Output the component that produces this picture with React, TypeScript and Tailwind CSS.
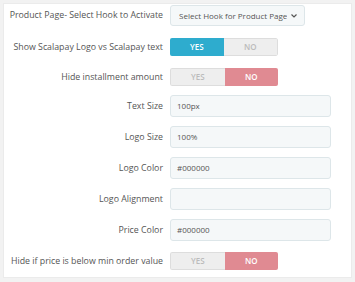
import React from "react";

const font = { fontFamily: '"Open Sans", "Noto Sans", sans-serif' };

function Label({ children }: { children: React.ReactNode }) {
  return (
    <div className="w-[159px] shrink-0 text-right text-[8.8px] text-[#555] leading-none whitespace-nowrap">
      {children}
    </div>
  );
}

function Toggle({ yes }: { yes: boolean }) {
  return (
    <div className="flex h-[18px] w-[108px] rounded-[2px] overflow-hidden text-[8px] font-semibold leading-none">
      <div
        className={
          yes
            ? "flex-1 flex items-center justify-center bg-[#2eacce] text-white"
            : "flex-1 flex items-center justify-center bg-[#eeeeee] text-[#bbbbbb] border border-[#dddddd] border-r-0 rounded-l-[2px]"
        }
      >
        YES
      </div>
      <div
        className={
          yes
            ? "flex-1 flex items-center justify-center bg-[#eeeeee] text-[#bbbbbb] border border-[#dddddd] border-l-0 rounded-r-[2px]"
            : "flex-1 flex items-center justify-center bg-[#e08a92] text-white"
        }
      >
        NO
      </div>
    </div>
  );
}

function Input({ value }: { value: string }) {
  return (
    <div className="h-[22px] w-[161px] rounded-[3px] border border-[#dde6e9] bg-[#f5f8f9] flex items-center px-[6px] text-[8px] text-[#555]">
      {value}
    </div>
  );
}

export default function App() {
  return (
    <div className="w-[355px] h-[282px] bg-[#f2f2f2] pt-[3px] pl-[3px]" style={font}>
      <div className="w-[349px] h-[275px] bg-white border border-[#ebebeb] flex flex-col">
        <div className="flex items-center gap-[7px] h-[21px] mt-[1px]">
          <Label>Product Page- Select Hook to Activate</Label>
          <div className="h-[21px] w-[135px] rounded-[3px] border border-[#dde6e9] bg-[#f5f8f9] flex items-center justify-between pl-[8px] pr-[6px] text-[8px] text-[#555]">
            <span className="whitespace-nowrap overflow-hidden">Select Hook for Product Page</span>
            <svg width="8" height="8" viewBox="0 0 8 8" className="shrink-0 ml-[3px]">
              <path d="M1.5 2.5 L4 5 L6.5 2.5" fill="none" stroke="#555" strokeWidth="1.2" />
            </svg>
          </div>
        </div>
        <div className="flex items-center gap-[7px] h-[18px] mt-[12px]">
          <Label>Show Scalapay Logo vs Scalapay text</Label>
          <Toggle yes />
        </div>
        <div className="flex items-center gap-[7px] h-[18px] mt-[12px]">
          <Label>Hide installment amount</Label>
          <Toggle yes={false} />
        </div>
        {[
          ["Text Size", "100px"],
          ["Logo Size", "100%"],
          ["Logo Color", "#000000"],
          ["Logo Alignment", ""],
          ["Price Color", "#000000"],
        ].map(([l, v]) => (
          <div key={l} className="flex items-center gap-[7px] h-[22px] mt-[9px]">
            <Label>{l}</Label>
            <Input value={v} />
          </div>
        ))}
        <div className="flex items-center gap-[7px] h-[18px] mt-[11px]">
          <Label>Hide if price is below min order value</Label>
          <Toggle yes={false} />
        </div>
      </div>
    </div>
  );
}
